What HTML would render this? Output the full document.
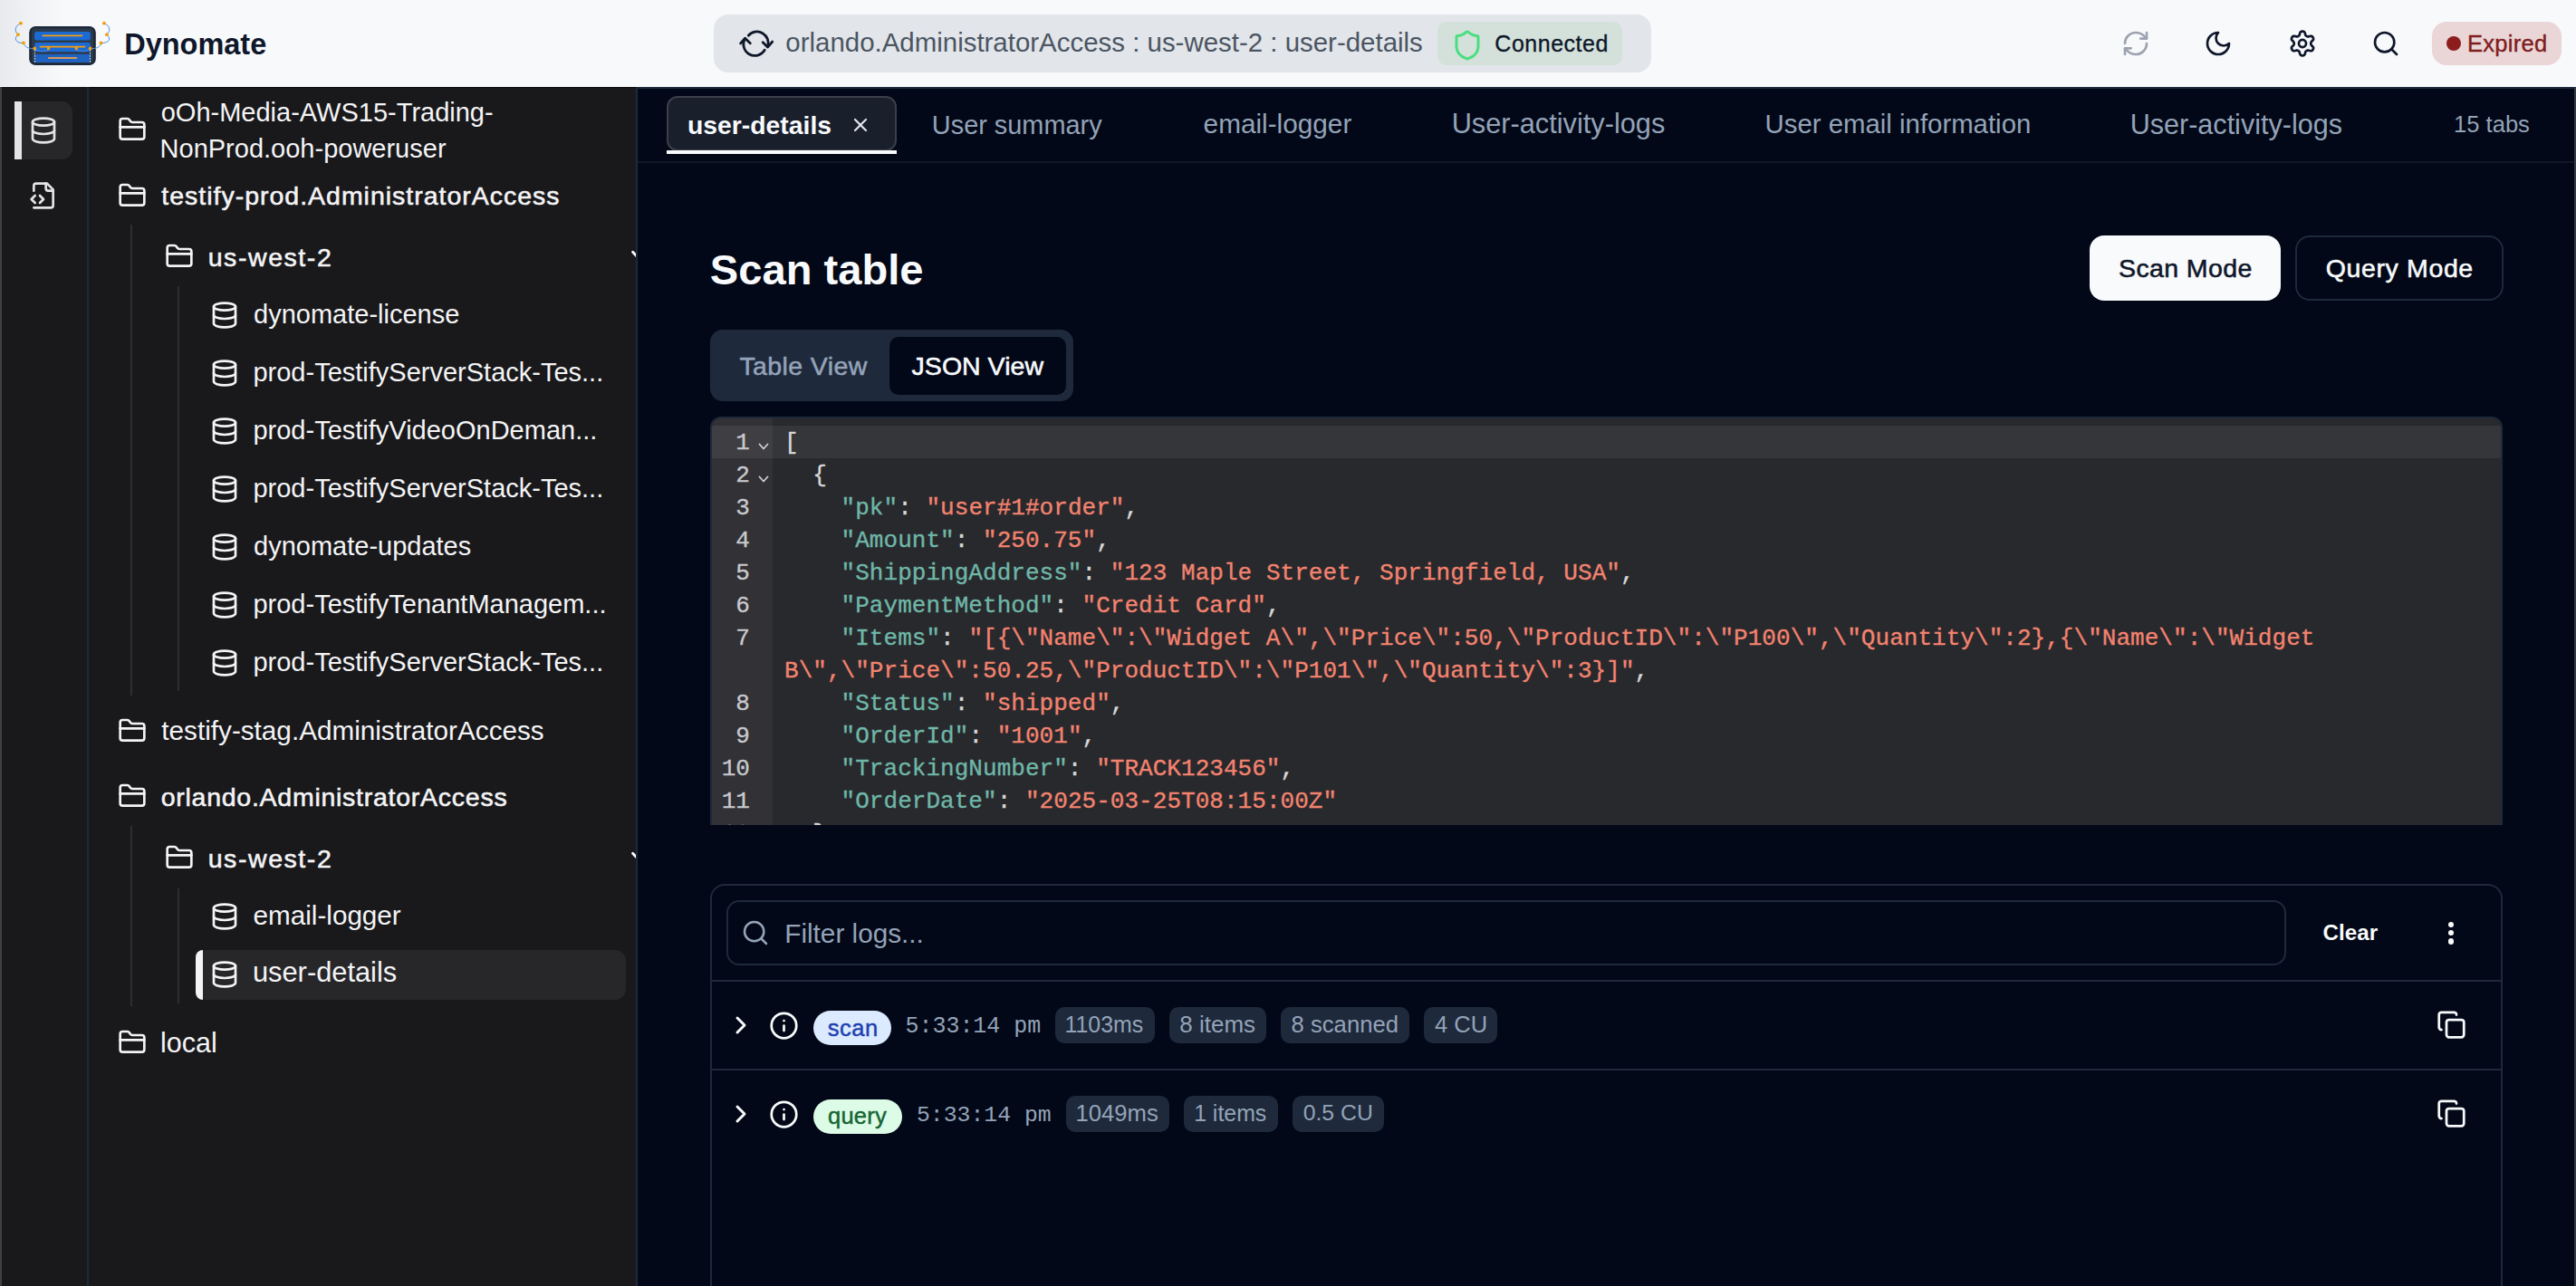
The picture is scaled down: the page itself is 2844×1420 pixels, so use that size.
<!DOCTYPE html><html><head><meta charset="utf-8"><title>Dynomate</title><style>
html,body{margin:0;padding:0;}
body{width:2844px;height:1420px;overflow:hidden;position:relative;background:#020817;font-family:"Liberation Sans",sans-serif;}
.b{position:absolute;}
.t{position:absolute;white-space:nowrap;line-height:0;}
.ic{position:absolute;overflow:visible;}
.code{position:absolute;font-family:"Liberation Mono",monospace;font-size:26px;line-height:0;white-space:pre;letter-spacing:0.04px;-webkit-text-stroke:0.35px currentColor;}
</style></head><body>
<div class="b" style="left:0px;top:0px;width:2844px;height:95px;background:#f8f9fb;"></div>
<div class="b" style="left:0px;top:95px;width:2844px;height:1px;background:#ffffff;"></div>
<div class="b" style="left:0px;top:0px;width:70px;height:95px;background:linear-gradient(90deg,#e9eaed,#f8f9fb);"></div>
<svg class="ic" style="left:10px;top:16px;width:120px;height:64px" viewBox="10 16 120 64">
<rect x="32.2" y="28.9" width="73.6" height="43.1" rx="7" fill="#1e293b"/>
<rect x="35" y="31.6" width="68" height="37.8" rx="4" fill="#2c3b4c"/>
<rect x="38.1" y="34.9" width="61.7" height="9.5" rx="2" fill="#1b6ad6"/>
<rect x="38.1" y="47.1" width="61.7" height="10.2" rx="2" fill="#1b6ad6"/>
<rect x="38.1" y="59.8" width="61.7" height="9.2" rx="0" fill="#1f62c0"/>
<path d="M47.3 39.4H90.6M44.3 51.6H93.6" stroke="#f59e0b" stroke-width="1.6" stroke-linecap="round"/>
<path d="M53.8 64H84.4" stroke="#d49a5a" stroke-width="1.8" stroke-linecap="round"/>
<rect x="52" y="51.6" width="3" height="3.6" fill="#f59e0b"/><rect x="82.8" y="51.6" width="3" height="3.6" fill="#f59e0b"/>
<path d="M23 25.7C17 28 15 34 20 38.2C15 42 17 48 26 47.4C27 52 32 54.3 38.3 53.5M38.3 53.5C43 58 50 57 53.5 55" stroke="#4a8fe6" stroke-width="1" fill="none"/>
<path d="M114.9 25.7C121 28 123 34 117.9 38.2C123 42 121 48 111.6 47.4C111 52 106 54.3 99.6 53.5M99.6 53.5C95 58 88 57 84.5 55" stroke="#4a8fe6" stroke-width="1" fill="none"/>
<g fill="#f59e0b"><circle cx="23" cy="25.7" r="1.9"/><circle cx="20" cy="38.2" r="1.9"/><circle cx="26" cy="47.4" r="1.9"/><circle cx="38.3" cy="53.5" r="1.9"/>
<circle cx="114.9" cy="25.7" r="1.9"/><circle cx="117.9" cy="38.2" r="1.9"/><circle cx="111.6" cy="47.4" r="1.9"/><circle cx="99.6" cy="53.5" r="1.9"/></g>
<path d="M38.4 55V69M99.5 55V69" stroke="#fff" stroke-width="0.9" stroke-dasharray="1.6 1.4"/>
</svg>
<div class="t" style="left:137.19px;top:48.74px;font-size:32.49px;color:#0f172a;font-weight:700;font-family:'Liberation Sans',sans-serif;">Dynomate</div>
<div class="b" style="left:788px;top:16px;width:1035px;height:64px;background:#e2e5e9;border-radius:16px;"></div>
<svg class="ic" style="left:805px;top:20px;width:80px;height:56px" viewBox="805 20 80 56" fill="none" stroke="#0f172a" stroke-width="2.8" stroke-linecap="round" stroke-linejoin="round">
<path d="M826.3 39.2A12.5 12.5 0 0 1 847.5 51.5"/><path d="M842.2 46.8L847.5 52L852.7 46.1"/>
<path d="M844.2 55.3A12.5 12.5 0 0 1 822.6 42.5"/><path d="M817.6 47.9L822.6 42.2L828.3 47.7"/>
</svg>
<div class="t" style="left:867.32px;top:47.39px;font-size:29.44px;color:#4b5563;font-weight:400;font-family:'Liberation Sans',sans-serif;">orlando.AdministratorAccess : us-west-2 : user-details</div>
<div class="b" style="left:1587px;top:24px;width:204px;height:48px;background:#d3e1da;border-radius:10px;"></div>
<svg class="ic" style="left:1602px;top:31.5px;width:36px;height:36px;" viewBox="0 0 24 24" fill="none" stroke="#4ade80" stroke-width="2" stroke-linecap="round" stroke-linejoin="round"><path d="M20 13c0 5-3.5 7.5-7.66 8.95a1 1 0 0 1-.67-.01C7.5 20.5 4 18 4 13V6a1 1 0 0 1 1-1c2 0 4.5-1.2 6.24-2.72a1.17 1.17 0 0 1 1.52 0C14.51 3.81 17 5 19 5a1 1 0 0 1 1 1z"/></svg>
<div class="t" style="left:1650.35px;top:47.73px;font-size:25.00px;letter-spacing:0.509px;-webkit-text-stroke:0.35px #0f172a;color:#0f172a;font-weight:400;font-family:'Liberation Sans',sans-serif;">Connected</div>
<svg class="ic" style="left:2342px;top:32px;width:32px;height:32px;" viewBox="0 0 24 24" fill="none" stroke="#9ca3af" stroke-width="2" stroke-linecap="round" stroke-linejoin="round"><path d="M3 12a9 9 0 0 1 9-9 9.75 9.75 0 0 1 6.74 2.74L21 8"/><path d="M21 3v5h-5"/><path d="M21 12a9 9 0 0 1-9 9 9.75 9.75 0 0 1-6.74-2.74L3 16"/><path d="M8 16H3v5"/></svg>
<svg class="ic" style="left:2433px;top:32px;width:32px;height:32px;" viewBox="0 0 24 24" fill="none" stroke="#0f172a" stroke-width="2" stroke-linecap="round" stroke-linejoin="round"><path d="M12 3a6 6 0 0 0 9 9 9 9 0 1 1-9-9Z"/></svg>
<svg class="ic" style="left:2524px;top:30px;width:36px;height:36px" viewBox="0 0 24 24" fill="none" stroke="#0f172a" stroke-width="1.8" stroke-linejoin="round"><path d="M18.20 12.00 L18.21 11.67 L18.26 11.34 L18.39 10.99 L18.73 10.57 L19.29 10.05 L19.82 9.46 L20.05 8.91 L20.05 8.42 L19.91 7.97 L19.71 7.55 L19.45 7.16 L19.13 6.82 L18.70 6.57 L18.11 6.50 L17.34 6.66 L16.60 6.89 L16.07 6.97 L15.70 6.91 L15.39 6.78 L15.10 6.63 L14.82 6.46 L14.56 6.25 L14.32 5.96 L14.13 5.46 L13.95 4.71 L13.71 3.96 L13.35 3.48 L12.92 3.24 L12.46 3.13 L12.00 3.10 L11.54 3.13 L11.08 3.24 L10.65 3.48 L10.29 3.96 L10.05 4.71 L9.87 5.46 L9.68 5.96 L9.44 6.25 L9.18 6.46 L8.90 6.63 L8.61 6.78 L8.30 6.91 L7.93 6.97 L7.40 6.89 L6.66 6.66 L5.89 6.50 L5.30 6.57 L4.87 6.82 L4.55 7.16 L4.29 7.55 L4.09 7.97 L3.95 8.42 L3.95 8.91 L4.18 9.46 L4.71 10.05 L5.27 10.57 L5.61 10.99 L5.74 11.34 L5.79 11.67 L5.80 12.00 L5.79 12.33 L5.74 12.66 L5.61 13.01 L5.27 13.43 L4.71 13.95 L4.18 14.54 L3.95 15.09 L3.95 15.58 L4.09 16.03 L4.29 16.45 L4.55 16.84 L4.87 17.18 L5.30 17.43 L5.89 17.50 L6.66 17.34 L7.40 17.11 L7.93 17.03 L8.30 17.09 L8.61 17.22 L8.90 17.37 L9.18 17.54 L9.44 17.75 L9.68 18.04 L9.87 18.54 L10.05 19.29 L10.29 20.04 L10.65 20.52 L11.08 20.76 L11.54 20.87 L12.00 20.90 L12.46 20.87 L12.92 20.76 L13.35 20.52 L13.71 20.04 L13.95 19.29 L14.13 18.54 L14.32 18.04 L14.56 17.75 L14.82 17.54 L15.10 17.37 L15.39 17.22 L15.70 17.09 L16.07 17.03 L16.60 17.11 L17.34 17.34 L18.11 17.50 L18.70 17.43 L19.13 17.18 L19.45 16.84 L19.71 16.45 L19.91 16.03 L20.05 15.58 L20.05 15.09 L19.82 14.54 L19.29 13.95 L18.73 13.43 L18.39 13.01 L18.26 12.66 L18.21 12.33Z"/><circle cx="12" cy="12" r="2.7"/></svg>
<svg class="ic" style="left:2618px;top:32px;width:32px;height:32px;" viewBox="0 0 24 24" fill="none" stroke="#0f172a" stroke-width="2" stroke-linecap="round" stroke-linejoin="round"><circle cx="11" cy="11" r="8"/><path d="m21 21-4.3-4.3"/></svg>
<div class="b" style="left:2685px;top:24px;width:143px;height:48px;background:#ead5d7;border-radius:16px;"></div>
<div class="b" style="left:2701px;top:40px;width:16px;height:16px;border-radius:50%;background:#8b1d1d"></div>
<div class="t" style="left:2723.96px;top:47.56px;font-size:25.50px;letter-spacing:0.304px;-webkit-text-stroke:0.4px #7f1d1d;color:#7f1d1d;font-weight:400;font-family:'Liberation Sans',sans-serif;">Expired</div>
<div class="b" style="left:0px;top:96px;width:96px;height:1324px;background:#19191c;"></div>
<div class="b" style="left:0px;top:96px;width:2px;height:1324px;background:#404044;"></div>
<div class="b" style="left:96px;top:96px;width:2px;height:1324px;background:#1c2a3d;"></div>
<div class="b" style="left:16px;top:112px;width:64px;height:64px;background:#27272a;border-radius:0 12px 12px 0;"></div>
<div class="b" style="left:16px;top:112px;width:8px;height:64px;background:#e4e4e7;"></div>
<svg class="ic" style="left:32px;top:128px;width:32px;height:32px;" viewBox="0 0 24 24" fill="none" stroke="#e4e4e7" stroke-width="2" stroke-linecap="round" stroke-linejoin="round"><ellipse cx="12" cy="5" rx="9" ry="3"/><path d="M3 5V19A9 3 0 0 0 21 19V5"/><path d="M3 12A9 3 0 0 0 21 12"/></svg>
<svg class="ic" style="left:32px;top:200px;width:32px;height:32px;" viewBox="0 0 24 24" fill="none" stroke="#e4e4e7" stroke-width="2" stroke-linecap="round" stroke-linejoin="round"><path d="M4 22h14a2 2 0 0 0 2-2V7l-5-5H6a2 2 0 0 0-2 2v4"/><path d="M14 2v4a2 2 0 0 0 2 2h4"/><path d="m5 12-3 3 3 3"/><path d="m9 18 3-3-3-3"/></svg>
<div class="b" style="left:98px;top:96px;width:604px;height:1324px;background:#19191c;"></div>
<div class="b" style="left:98px;top:96px;width:604px;height:1px;background:#0e0e10;"></div>
<div class="b" style="left:702px;top:96px;width:2px;height:1324px;background:#1c2a3d;"></div>
<div class="b" style="left:144px;top:248px;width:2px;height:520px;background:#2e2e32;"></div>
<div class="b" style="left:196px;top:316px;width:2px;height:447px;background:#2e2e32;"></div>
<div class="b" style="left:144px;top:912px;width:2px;height:199px;background:#2e2e32;"></div>
<div class="b" style="left:196px;top:981px;width:2px;height:127px;background:#2e2e32;"></div>
<div class="b" style="left:216px;top:1049px;width:475px;height:55px;background:#27272a;border-radius:12px;"></div>
<div class="b" style="left:216px;top:1049px;width:8px;height:55px;background:#f4f4f5;border-radius:12px 0 0 12px;"></div>
<div class="t" style="left:177.74px;top:124.15px;font-size:29.00px;color:#f4f4f5;font-weight:400;font-family:'Liberation Sans',sans-serif;">oOh-Media-AWS15-Trading-</div>
<div class="t" style="left:176.58px;top:163.75px;font-size:29.00px;color:#f4f4f5;font-weight:400;font-family:'Liberation Sans',sans-serif;">NonProd.ooh-poweruser</div>
<svg class="ic" style="left:129.8px;top:127.4px;width:32px;height:32px;" viewBox="0 0 24 24" fill="none" stroke="#f4f4f5" stroke-width="2" stroke-linecap="round" stroke-linejoin="round"><path d="M20 20a2 2 0 0 0 2-2V8a2 2 0 0 0-2-2h-7.9a2 2 0 0 1-1.69-.9L9.6 3.9A2 2 0 0 0 7.93 3H4a2 2 0 0 0-2 2v13a2 2 0 0 0 2 2Z"/><path d="M2 10h20"/></svg>
<div class="t" style="left:178.37px;top:215.82px;font-size:28.50px;letter-spacing:0.985px;-webkit-text-stroke:0.55px #f4f4f5;color:#f4f4f5;font-weight:400;font-family:'Liberation Sans',sans-serif;">testify-prod.AdministratorAccess</div>
<svg class="ic" style="left:129.8px;top:199.7px;width:32px;height:32px;" viewBox="0 0 24 24" fill="none" stroke="#f4f4f5" stroke-width="2" stroke-linecap="round" stroke-linejoin="round"><path d="M20 20a2 2 0 0 0 2-2V8a2 2 0 0 0-2-2h-7.9a2 2 0 0 1-1.69-.9L9.6 3.9A2 2 0 0 0 7.93 3H4a2 2 0 0 0-2 2v13a2 2 0 0 0 2 2Z"/><path d="M2 10h20"/></svg>
<div class="t" style="left:229.69px;top:283.92px;font-size:28.50px;letter-spacing:1.568px;-webkit-text-stroke:0.55px #f4f4f5;color:#f4f4f5;font-weight:400;font-family:'Liberation Sans',sans-serif;">us-west-2</div>
<svg class="ic" style="left:181.8px;top:267.3px;width:32px;height:32px;" viewBox="0 0 24 24" fill="none" stroke="#f4f4f5" stroke-width="2" stroke-linecap="round" stroke-linejoin="round"><path d="M20 20a2 2 0 0 0 2-2V8a2 2 0 0 0-2-2h-7.9a2 2 0 0 1-1.69-.9L9.6 3.9A2 2 0 0 0 7.93 3H4a2 2 0 0 0-2 2v13a2 2 0 0 0 2 2Z"/><path d="M2 10h20"/></svg>
<div class="t" style="left:280.04px;top:347.15px;font-size:29.00px;color:#f4f4f5;font-weight:400;font-family:'Liberation Sans',sans-serif;">dynomate-license</div>
<svg class="ic" style="left:232px;top:331.7px;width:32px;height:32px;" viewBox="0 0 24 24" fill="none" stroke="#f4f4f5" stroke-width="2" stroke-linecap="round" stroke-linejoin="round"><ellipse cx="12" cy="5" rx="9" ry="3"/><path d="M3 5V19A9 3 0 0 0 21 19V5"/><path d="M3 12A9 3 0 0 0 21 12"/></svg>
<div class="t" style="left:279.46px;top:411.15px;font-size:29.00px;color:#f4f4f5;font-weight:400;font-family:'Liberation Sans',sans-serif;">prod-TestifyServerStack-Tes...</div>
<svg class="ic" style="left:232px;top:395.7px;width:32px;height:32px;" viewBox="0 0 24 24" fill="none" stroke="#f4f4f5" stroke-width="2" stroke-linecap="round" stroke-linejoin="round"><ellipse cx="12" cy="5" rx="9" ry="3"/><path d="M3 5V19A9 3 0 0 0 21 19V5"/><path d="M3 12A9 3 0 0 0 21 12"/></svg>
<div class="t" style="left:279.46px;top:475.15px;font-size:29.00px;color:#f4f4f5;font-weight:400;font-family:'Liberation Sans',sans-serif;">prod-TestifyVideoOnDeman...</div>
<svg class="ic" style="left:232px;top:459.7px;width:32px;height:32px;" viewBox="0 0 24 24" fill="none" stroke="#f4f4f5" stroke-width="2" stroke-linecap="round" stroke-linejoin="round"><ellipse cx="12" cy="5" rx="9" ry="3"/><path d="M3 5V19A9 3 0 0 0 21 19V5"/><path d="M3 12A9 3 0 0 0 21 12"/></svg>
<div class="t" style="left:279.46px;top:539.15px;font-size:29.00px;color:#f4f4f5;font-weight:400;font-family:'Liberation Sans',sans-serif;">prod-TestifyServerStack-Tes...</div>
<svg class="ic" style="left:232px;top:523.7px;width:32px;height:32px;" viewBox="0 0 24 24" fill="none" stroke="#f4f4f5" stroke-width="2" stroke-linecap="round" stroke-linejoin="round"><ellipse cx="12" cy="5" rx="9" ry="3"/><path d="M3 5V19A9 3 0 0 0 21 19V5"/><path d="M3 12A9 3 0 0 0 21 12"/></svg>
<div class="t" style="left:280.04px;top:603.15px;font-size:29.00px;color:#f4f4f5;font-weight:400;font-family:'Liberation Sans',sans-serif;">dynomate-updates</div>
<svg class="ic" style="left:232px;top:587.7px;width:32px;height:32px;" viewBox="0 0 24 24" fill="none" stroke="#f4f4f5" stroke-width="2" stroke-linecap="round" stroke-linejoin="round"><ellipse cx="12" cy="5" rx="9" ry="3"/><path d="M3 5V19A9 3 0 0 0 21 19V5"/><path d="M3 12A9 3 0 0 0 21 12"/></svg>
<div class="t" style="left:279.46px;top:667.15px;font-size:29.00px;color:#f4f4f5;font-weight:400;font-family:'Liberation Sans',sans-serif;">prod-TestifyTenantManagem...</div>
<svg class="ic" style="left:232px;top:651.7px;width:32px;height:32px;" viewBox="0 0 24 24" fill="none" stroke="#f4f4f5" stroke-width="2" stroke-linecap="round" stroke-linejoin="round"><ellipse cx="12" cy="5" rx="9" ry="3"/><path d="M3 5V19A9 3 0 0 0 21 19V5"/><path d="M3 12A9 3 0 0 0 21 12"/></svg>
<div class="t" style="left:279.46px;top:731.15px;font-size:29.00px;color:#f4f4f5;font-weight:400;font-family:'Liberation Sans',sans-serif;">prod-TestifyServerStack-Tes...</div>
<svg class="ic" style="left:232px;top:715.7px;width:32px;height:32px;" viewBox="0 0 24 24" fill="none" stroke="#f4f4f5" stroke-width="2" stroke-linecap="round" stroke-linejoin="round"><ellipse cx="12" cy="5" rx="9" ry="3"/><path d="M3 5V19A9 3 0 0 0 21 19V5"/><path d="M3 12A9 3 0 0 0 21 12"/></svg>
<div class="t" style="left:178.35px;top:806.90px;font-size:29.70px;color:#f4f4f5;font-weight:400;font-family:'Liberation Sans',sans-serif;">testify-stag.AdministratorAccess</div>
<svg class="ic" style="left:129.8px;top:791.2px;width:32px;height:32px;" viewBox="0 0 24 24" fill="none" stroke="#f4f4f5" stroke-width="2" stroke-linecap="round" stroke-linejoin="round"><path d="M20 20a2 2 0 0 0 2-2V8a2 2 0 0 0-2-2h-7.9a2 2 0 0 1-1.69-.9L9.6 3.9A2 2 0 0 0 7.93 3H4a2 2 0 0 0-2 2v13a2 2 0 0 0 2 2Z"/><path d="M2 10h20"/></svg>
<div class="t" style="left:177.66px;top:879.52px;font-size:28.50px;letter-spacing:0.740px;-webkit-text-stroke:0.55px #f4f4f5;color:#f4f4f5;font-weight:400;font-family:'Liberation Sans',sans-serif;">orlando.AdministratorAccess</div>
<svg class="ic" style="left:129.8px;top:863.2px;width:32px;height:32px;" viewBox="0 0 24 24" fill="none" stroke="#f4f4f5" stroke-width="2" stroke-linecap="round" stroke-linejoin="round"><path d="M20 20a2 2 0 0 0 2-2V8a2 2 0 0 0-2-2h-7.9a2 2 0 0 1-1.69-.9L9.6 3.9A2 2 0 0 0 7.93 3H4a2 2 0 0 0-2 2v13a2 2 0 0 0 2 2Z"/><path d="M2 10h20"/></svg>
<div class="t" style="left:229.69px;top:947.82px;font-size:28.50px;letter-spacing:1.568px;-webkit-text-stroke:0.55px #f4f4f5;color:#f4f4f5;font-weight:400;font-family:'Liberation Sans',sans-serif;">us-west-2</div>
<svg class="ic" style="left:181.8px;top:931.3px;width:32px;height:32px;" viewBox="0 0 24 24" fill="none" stroke="#f4f4f5" stroke-width="2" stroke-linecap="round" stroke-linejoin="round"><path d="M20 20a2 2 0 0 0 2-2V8a2 2 0 0 0-2-2h-7.9a2 2 0 0 1-1.69-.9L9.6 3.9A2 2 0 0 0 7.93 3H4a2 2 0 0 0-2 2v13a2 2 0 0 0 2 2Z"/><path d="M2 10h20"/></svg>
<div class="t" style="left:279.61px;top:1010.52px;font-size:29.65px;color:#f4f4f5;font-weight:400;font-family:'Liberation Sans',sans-serif;">email-logger</div>
<svg class="ic" style="left:232px;top:995.9px;width:32px;height:32px;" viewBox="0 0 24 24" fill="none" stroke="#f4f4f5" stroke-width="2" stroke-linecap="round" stroke-linejoin="round"><ellipse cx="12" cy="5" rx="9" ry="3"/><path d="M3 5V19A9 3 0 0 0 21 19V5"/><path d="M3 12A9 3 0 0 0 21 12"/></svg>
<div class="t" style="left:278.95px;top:1074.32px;font-size:30.82px;color:#f4f4f5;font-weight:400;font-family:'Liberation Sans',sans-serif;">user-details</div>
<svg class="ic" style="left:232px;top:1059.8px;width:32px;height:32px;" viewBox="0 0 24 24" fill="none" stroke="#f4f4f5" stroke-width="2" stroke-linecap="round" stroke-linejoin="round"><ellipse cx="12" cy="5" rx="9" ry="3"/><path d="M3 5V19A9 3 0 0 0 21 19V5"/><path d="M3 12A9 3 0 0 0 21 12"/></svg>
<div class="t" style="left:177.02px;top:1150.74px;font-size:30.47px;color:#f4f4f5;font-weight:400;font-family:'Liberation Sans',sans-serif;">local</div>
<svg class="ic" style="left:129.8px;top:1135.2px;width:32px;height:32px;" viewBox="0 0 24 24" fill="none" stroke="#f4f4f5" stroke-width="2" stroke-linecap="round" stroke-linejoin="round"><path d="M20 20a2 2 0 0 0 2-2V8a2 2 0 0 0-2-2h-7.9a2 2 0 0 1-1.69-.9L9.6 3.9A2 2 0 0 0 7.93 3H4a2 2 0 0 0-2 2v13a2 2 0 0 0 2 2Z"/><path d="M2 10h20"/></svg>
<svg style="position:absolute;overflow:hidden;left:688px;top:273px;width:14px;height:16px" viewBox="0 0 14 16"><path d="M10.6 5.2 L14.5 9.5" stroke="#fff" stroke-width="2.8" stroke-linecap="round"/></svg>
<svg style="position:absolute;overflow:hidden;left:688px;top:937px;width:14px;height:16px" viewBox="0 0 14 16"><path d="M10.6 5.2 L14.5 9.5" stroke="#fff" stroke-width="2.8" stroke-linecap="round"/></svg>
<div class="b" style="left:704px;top:96px;width:2138px;height:2px;background:#1c2a3d;"></div>
<div class="b" style="left:704px;top:98px;width:2138px;height:1322px;background:#020817;"></div>
<div class="b" style="left:2842px;top:96px;width:2px;height:1324px;background:#36383f;"></div>
<div class="b" style="left:736px;top:106px;width:254px;height:61px;background:#1a1f2c;border:2px solid #3a3f4b;border-radius:12px;box-sizing:border-box;"></div>
<div class="b" style="left:736px;top:166px;width:254px;height:4px;background:#f8fafc;"></div>
<div class="t" style="left:758.90px;top:137.77px;font-size:28.36px;color:#f8fafc;font-weight:700;font-family:'Liberation Sans',sans-serif;">user-details</div>
<svg class="ic" style="left:938px;top:126px;width:24px;height:24px;" viewBox="0 0 24 24" fill="none" stroke="#e2e8f0" stroke-width="2.2" stroke-linecap="round" stroke-linejoin="round"><path d="M18 6 6 18"/><path d="m6 6 12 12"/></svg>
<div class="t" style="left:1028.83px;top:137.58px;font-size:28.90px;color:#94a3b8;font-weight:400;font-family:'Liberation Sans',sans-serif;">User summary</div>
<div class="t" style="left:1328.61px;top:137.28px;font-size:29.76px;color:#94a3b8;font-weight:400;font-family:'Liberation Sans',sans-serif;">email-logger</div>
<div class="t" style="left:1602.70px;top:136.95px;font-size:30.73px;color:#94a3b8;font-weight:400;font-family:'Liberation Sans',sans-serif;">User-activity-logs</div>
<div class="t" style="left:1948.60px;top:137.42px;font-size:29.36px;color:#94a3b8;font-weight:400;font-family:'Liberation Sans',sans-serif;">User email information</div>
<div class="t" style="left:2351.71px;top:137.01px;font-size:30.56px;color:#94a3b8;font-weight:400;font-family:'Liberation Sans',sans-serif;">User-activity-logs</div>
<div class="t" style="left:2709.08px;top:136.64px;font-size:25.55px;color:#94a3b8;font-weight:400;font-family:'Liberation Sans',sans-serif;">15 tabs</div>
<div class="b" style="left:704px;top:178px;width:2138px;height:2px;background:#111827;"></div>
<div class="t" style="left:783.82px;top:298.26px;font-size:47.12px;color:#f8fafc;font-weight:700;font-family:'Liberation Sans',sans-serif;">Scan table</div>
<div class="b" style="left:784px;top:364px;width:401px;height:79px;background:#1e293b;border-radius:14px;"></div>
<div class="b" style="left:982px;top:372px;width:195px;height:64px;background:#020817;border-radius:10px;"></div>
<div class="t" style="left:816.43px;top:404.12px;font-size:28.50px;letter-spacing:0.400px;-webkit-text-stroke:0.55px #94a3b8;color:#94a3b8;font-weight:400;font-family:'Liberation Sans',sans-serif;">Table View</div>
<div class="t" style="left:1006.57px;top:404.12px;font-size:28.50px;letter-spacing:0.027px;-webkit-text-stroke:0.55px #f8fafc;color:#f8fafc;font-weight:400;font-family:'Liberation Sans',sans-serif;">JSON View</div>
<div class="b" style="left:2307px;top:260px;width:211px;height:72px;background:#f8fafc;border-radius:16px;"></div>
<div class="t" style="left:2339.12px;top:295.52px;font-size:28.50px;letter-spacing:0.377px;-webkit-text-stroke:0.55px #0f172a;color:#0f172a;font-weight:400;font-family:'Liberation Sans',sans-serif;">Scan Mode</div>
<div class="b" style="left:2534px;top:260px;width:230px;height:72px;background:transparent;border:2px solid #1e293b;border-radius:16px;box-sizing:border-box;"></div>
<div class="t" style="left:2567.72px;top:295.52px;font-size:28.50px;letter-spacing:0.630px;-webkit-text-stroke:0.55px #f8fafc;color:#f8fafc;font-weight:400;font-family:'Liberation Sans',sans-serif;">Query Mode</div>
<div class="b" style="left:784px;top:460px;width:1979px;height:451px;border:2px solid #1e293b;border-bottom:none;border-radius:12px 12px 0 0;box-sizing:border-box;background:#28292d;overflow:hidden"><div class="b" style="left:0;top:0;width:67px;height:451px;background:#313136"></div><div class="b" style="left:0;top:8px;width:67px;height:36px;background:#3e3e43"></div><div class="b" style="left:67px;top:8px;width:1910px;height:36px;background:#35363a"></div></div>
<div class="b" style="left:786px;top:462px;width:1975px;height:449px;overflow:hidden"><div class="code" style="left:0px;top:27.08px;width:42px;text-align:right;color:#c8c8cc">1</div><svg class="ic" style="left:50px;top:25px;width:14px;height:12px" viewBox="0 0 14 12" fill="none" stroke="#d0d0d4" stroke-width="1.8" stroke-linecap="round" stroke-linejoin="round"><path d="M2.5 3.5 7 8.5 11.5 3.5"/></svg><div class="code" style="left:80.00px;top:27.08px;white-space:pre"><span style="color:#d8d8d8">[</span></div><div class="code" style="left:0px;top:63.08px;width:42px;text-align:right;color:#c8c8cc">2</div><svg class="ic" style="left:50px;top:61px;width:14px;height:12px" viewBox="0 0 14 12" fill="none" stroke="#d0d0d4" stroke-width="1.8" stroke-linecap="round" stroke-linejoin="round"><path d="M2.5 3.5 7 8.5 11.5 3.5"/></svg><div class="code" style="left:80.00px;top:63.08px;white-space:pre"><span style="color:#d8d8d8">  {</span></div><div class="code" style="left:0px;top:99.08px;width:42px;text-align:right;color:#c8c8cc">3</div><div class="code" style="left:80.00px;top:99.08px;white-space:pre"><span style="color:#d8d8d8">    </span><span style="color:#6fb7a8">&quot;pk&quot;</span><span style="color:#d8d8d8">: </span><span style="color:#f3836f">&quot;user#1#order&quot;</span><span style="color:#d8d8d8">,</span></div><div class="code" style="left:0px;top:135.08px;width:42px;text-align:right;color:#c8c8cc">4</div><div class="code" style="left:80.00px;top:135.08px;white-space:pre"><span style="color:#d8d8d8">    </span><span style="color:#6fb7a8">&quot;Amount&quot;</span><span style="color:#d8d8d8">: </span><span style="color:#f3836f">&quot;250.75&quot;</span><span style="color:#d8d8d8">,</span></div><div class="code" style="left:0px;top:171.08px;width:42px;text-align:right;color:#c8c8cc">5</div><div class="code" style="left:80.00px;top:171.08px;white-space:pre"><span style="color:#d8d8d8">    </span><span style="color:#6fb7a8">&quot;ShippingAddress&quot;</span><span style="color:#d8d8d8">: </span><span style="color:#f3836f">&quot;123 Maple Street, Springfield, USA&quot;</span><span style="color:#d8d8d8">,</span></div><div class="code" style="left:0px;top:207.08px;width:42px;text-align:right;color:#c8c8cc">6</div><div class="code" style="left:80.00px;top:207.08px;white-space:pre"><span style="color:#d8d8d8">    </span><span style="color:#6fb7a8">&quot;PaymentMethod&quot;</span><span style="color:#d8d8d8">: </span><span style="color:#f3836f">&quot;Credit Card&quot;</span><span style="color:#d8d8d8">,</span></div><div class="code" style="left:0px;top:243.08px;width:42px;text-align:right;color:#c8c8cc">7</div><div class="code" style="left:80.00px;top:243.08px;white-space:pre"><span style="color:#d8d8d8">    </span><span style="color:#6fb7a8">&quot;Items&quot;</span><span style="color:#d8d8d8">: </span><span style="color:#f3836f">&quot;[{\&quot;Name\&quot;:\&quot;Widget A\&quot;,\&quot;Price\&quot;:50,\&quot;ProductID\&quot;:\&quot;P100\&quot;,\&quot;Quantity\&quot;:2},{\&quot;Name\&quot;:\&quot;Widget </span></div><div class="code" style="left:80.00px;top:279.08px;white-space:pre"><span style="color:#f3836f">B\&quot;,\&quot;Price\&quot;:50.25,\&quot;ProductID\&quot;:\&quot;P101\&quot;,\&quot;Quantity\&quot;:3}]&quot;</span><span style="color:#d8d8d8">,</span></div><div class="code" style="left:0px;top:315.08px;width:42px;text-align:right;color:#c8c8cc">8</div><div class="code" style="left:80.00px;top:315.08px;white-space:pre"><span style="color:#d8d8d8">    </span><span style="color:#6fb7a8">&quot;Status&quot;</span><span style="color:#d8d8d8">: </span><span style="color:#f3836f">&quot;shipped&quot;</span><span style="color:#d8d8d8">,</span></div><div class="code" style="left:0px;top:351.08px;width:42px;text-align:right;color:#c8c8cc">9</div><div class="code" style="left:80.00px;top:351.08px;white-space:pre"><span style="color:#d8d8d8">    </span><span style="color:#6fb7a8">&quot;OrderId&quot;</span><span style="color:#d8d8d8">: </span><span style="color:#f3836f">&quot;1001&quot;</span><span style="color:#d8d8d8">,</span></div><div class="code" style="left:0px;top:387.08px;width:42px;text-align:right;color:#c8c8cc">10</div><div class="code" style="left:80.00px;top:387.08px;white-space:pre"><span style="color:#d8d8d8">    </span><span style="color:#6fb7a8">&quot;TrackingNumber&quot;</span><span style="color:#d8d8d8">: </span><span style="color:#f3836f">&quot;TRACK123456&quot;</span><span style="color:#d8d8d8">,</span></div><div class="code" style="left:0px;top:423.08px;width:42px;text-align:right;color:#c8c8cc">11</div><div class="code" style="left:80.00px;top:423.08px;white-space:pre"><span style="color:#d8d8d8">    </span><span style="color:#6fb7a8">&quot;OrderDate&quot;</span><span style="color:#d8d8d8">: </span><span style="color:#f3836f">&quot;2025-03-25T08:15:00Z&quot;</span></div><div class="code" style="left:0px;top:459.08px;width:42px;text-align:right;color:#c8c8cc">12</div><div class="code" style="left:80.00px;top:459.08px;white-space:pre"><span style="color:#d8d8d8">  },</span></div></div>
<div class="b" style="left:784px;top:976px;width:1979px;height:480px;border:2px solid #1e293b;border-radius:16px;box-sizing:border-box"></div>
<div class="b" style="left:802px;top:994px;width:1722px;height:72px;border:2px solid #1e293b;border-radius:14px;box-sizing:border-box"></div>
<svg class="ic" style="left:818px;top:1014px;width:32px;height:32px;" viewBox="0 0 24 24" fill="none" stroke="#94a3b8" stroke-width="1.9" stroke-linecap="round" stroke-linejoin="round"><circle cx="11" cy="11" r="8"/><path d="m21 21-4.3-4.3"/></svg>
<div class="t" style="left:866.22px;top:1030.89px;font-size:29.74px;color:#94a3b8;font-weight:400;font-family:'Liberation Sans',sans-serif;">Filter logs...</div>
<div class="t" style="left:2564.53px;top:1030.01px;font-size:24.21px;color:#f8fafc;font-weight:700;font-family:'Liberation Sans',sans-serif;">Clear</div>
<div class="b" style="left:2702.8px;top:1017.8px;width:6.4px;height:6.4px;border-radius:50%;background:#f8fafc"></div>
<div class="b" style="left:2702.8px;top:1027.1px;width:6.4px;height:6.4px;border-radius:50%;background:#f8fafc"></div>
<div class="b" style="left:2702.8px;top:1036.3999999999999px;width:6.4px;height:6.4px;border-radius:50%;background:#f8fafc"></div>
<div class="b" style="left:786px;top:1082px;width:1975px;height:2px;background:#1e293b;"></div>
<div class="b" style="left:786px;top:1180px;width:1975px;height:2px;background:#1e293b;"></div>
<svg class="ic" style="left:802px;top:1116px;width:32px;height:32px;" viewBox="0 0 24 24" fill="none" stroke="#f8fafc" stroke-width="2.2" stroke-linecap="round" stroke-linejoin="round"><path d="m9 18 6-6-6-6"/></svg>
<svg class="ic" style="left:849.2px;top:1115.5px;width:33px;height:33px;" viewBox="0 0 24 24" fill="none" stroke="#f8fafc" stroke-width="2" stroke-linecap="round" stroke-linejoin="round"><circle cx="12" cy="12" r="10"/><path d="M12 16v-4"/><path d="M12 8h.01"/></svg>
<div class="b" style="left:898px;top:1116px;width:86px;height:38px;background:#dbeafe;border-radius:19px;"></div>
<div class="t" style="left:913.76px;top:1135.16px;font-size:25.50px;letter-spacing:0.488px;-webkit-text-stroke:0.45px #1e40af;color:#1e40af;font-weight:400;font-family:'Liberation Sans',sans-serif;">scan</div>
<div class="t" style="left:999.50px;top:1133.16px;font-size:24.96px;color:#94a3b8;font-weight:400;font-family:'Liberation Mono',monospace;">5:33:14 pm</div>
<div class="b" style="left:1165px;top:1112px;width:110px;height:39.5px;background:#1e293b;border-radius:10px;"></div>
<div class="t" style="left:1175.43px;top:1131.16px;font-size:24.92px;color:#94a3b8;font-weight:400;font-family:'Liberation Sans',sans-serif;">1103ms</div>
<div class="b" style="left:1291px;top:1112px;width:107px;height:39.5px;background:#1e293b;border-radius:10px;"></div>
<div class="t" style="left:1302.36px;top:1130.80px;font-size:25.97px;color:#94a3b8;font-weight:400;font-family:'Liberation Sans',sans-serif;">8 items</div>
<div class="b" style="left:1414px;top:1112px;width:142px;height:39.5px;background:#1e293b;border-radius:10px;"></div>
<div class="t" style="left:1425.47px;top:1130.88px;font-size:25.71px;color:#94a3b8;font-weight:400;font-family:'Liberation Sans',sans-serif;">8 scanned</div>
<div class="b" style="left:1572px;top:1112px;width:81px;height:39.5px;background:#1e293b;border-radius:10px;"></div>
<div class="t" style="left:1583.89px;top:1130.94px;font-size:25.55px;color:#94a3b8;font-weight:400;font-family:'Liberation Sans',sans-serif;">4 CU</div>
<svg class="ic" style="left:2689.5px;top:1115.3px;width:33px;height:33px;" viewBox="0 0 24 24" fill="none" stroke="#f8fafc" stroke-width="2" stroke-linecap="round" stroke-linejoin="round"><rect width="14" height="14" x="8" y="8" rx="2" ry="2"/><path d="M4 16c-1.1 0-2-.9-2-2V4c0-1.1.9-2 2-2h10c1.1 0 2 .9 2 2"/></svg>
<svg class="ic" style="left:802px;top:1214px;width:32px;height:32px;" viewBox="0 0 24 24" fill="none" stroke="#f8fafc" stroke-width="2.2" stroke-linecap="round" stroke-linejoin="round"><path d="m9 18 6-6-6-6"/></svg>
<svg class="ic" style="left:849.2px;top:1213.5px;width:33px;height:33px;" viewBox="0 0 24 24" fill="none" stroke="#f8fafc" stroke-width="2" stroke-linecap="round" stroke-linejoin="round"><circle cx="12" cy="12" r="10"/><path d="M12 16v-4"/><path d="M12 8h.01"/></svg>
<div class="b" style="left:898px;top:1214px;width:98px;height:38px;background:#dcfce7;border-radius:19px;"></div>
<div class="t" style="left:913.98px;top:1232.26px;font-size:25.50px;letter-spacing:0.267px;-webkit-text-stroke:0.45px #166534;color:#166534;font-weight:400;font-family:'Liberation Sans',sans-serif;">query</div>
<div class="t" style="left:1011.91px;top:1231.20px;font-size:24.80px;color:#94a3b8;font-weight:400;font-family:'Liberation Mono',monospace;">5:33:14 pm</div>
<div class="b" style="left:1177px;top:1210px;width:114px;height:39.5px;background:#1e293b;border-radius:10px;"></div>
<div class="t" style="left:1187.58px;top:1228.91px;font-size:25.65px;color:#94a3b8;font-weight:400;font-family:'Liberation Sans',sans-serif;">1049ms</div>
<div class="b" style="left:1307px;top:1210px;width:104px;height:39.5px;background:#1e293b;border-radius:10px;"></div>
<div class="t" style="left:1318.13px;top:1229.17px;font-size:24.88px;color:#94a3b8;font-weight:400;font-family:'Liberation Sans',sans-serif;">1 items</div>
<div class="b" style="left:1427px;top:1210px;width:101px;height:39.5px;background:#1e293b;border-radius:10px;"></div>
<div class="t" style="left:1438.63px;top:1229.19px;font-size:24.83px;color:#94a3b8;font-weight:400;font-family:'Liberation Sans',sans-serif;">0.5 CU</div>
<svg class="ic" style="left:2689.5px;top:1213.3px;width:33px;height:33px;" viewBox="0 0 24 24" fill="none" stroke="#f8fafc" stroke-width="2" stroke-linecap="round" stroke-linejoin="round"><rect width="14" height="14" x="8" y="8" rx="2" ry="2"/><path d="M4 16c-1.1 0-2-.9-2-2V4c0-1.1.9-2 2-2h10c1.1 0 2 .9 2 2"/></svg>
</body></html>
